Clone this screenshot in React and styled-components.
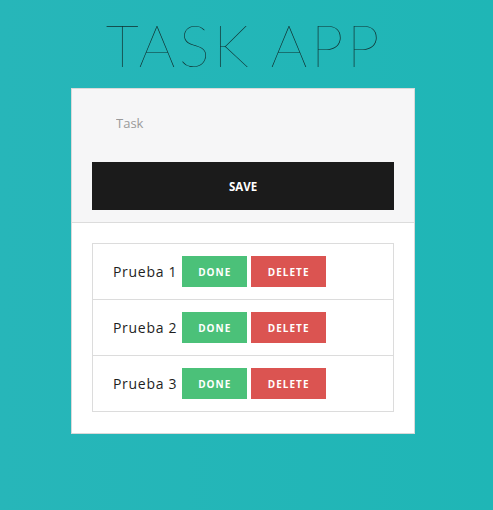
import styled, { createGlobalStyle } from "styled-components";

const Global = createGlobalStyle`
	html, body {
		margin: 0;
		padding: 0;
	}
	body {
		min-height: 510px;
		background: linear-gradient(90deg, #27b6b9 0%, #1fb6b6 100%);
		font-family: "Lato", "Open Sans", sans-serif;
	}
`;

const Page = styled.div`
	display: flex;
	flex-direction: column;
	align-items: center;
	padding: 9px 7px 0 0;
`;

const Title = styled.h1`
	margin: 0 0 8px;
	font-family: "Lato", sans-serif;
	font-weight: 100;
	font-size: 58px;
	line-height: 71px;
	letter-spacing: 3.6px;
	color: #102a2a;
	padding-left: 3px;
`;

const Card = styled.div`
	width: 342px;
	background: #fff;
	border: 1px solid #d9d9d9;
`;

const Form = styled.div`
	display: flex;
	flex-direction: column;
	gap: 16px;
	padding: 11px 20px 12px;
	background: #f6f6f7;
	border-bottom: 1px solid #dcdcdc;
`;

const Input = styled.input`
	height: 46px;
	padding: 0 24px;
	border: none;
	outline: none;
	background: transparent;
	font-family: "Open Sans", sans-serif;
	font-size: 13px;
	color: #333;
	&::placeholder {
		color: #9a9a9a;
	}
`;

const SaveButton = styled.button`
	height: 48px;
	border: none;
	background: #1b1b1b;
	color: #fff;
	font-family: "Open Sans", sans-serif;
	font-weight: 700;
	font-size: 11.5px;
	cursor: pointer;
`;

const ListBox = styled.ul`
	margin: 20px 20px 21px;
	padding: 0;
	list-style: none;
	border: 1px solid #dcdcdc;
`;

const Row = styled.li`
	display: flex;
	align-items: center;
	height: 55px;
	padding-left: 20px;
	border-top: 1px solid #dcdcdc;
	&:first-child {
		border-top: none;
	}
`;

const Name = styled.span`
	font-family: "Open Sans", sans-serif;
	font-size: 14px;
	letter-spacing: 0.7px;
	color: #1e1e1e;
	margin-right: 5px;
`;

const Action = styled.button`
	width: ${(p) => p.$w}px;
	height: 31px;
	margin-right: 4px;
	border: none;
	background: ${(p) => p.$bg};
	color: #fff;
	font-family: "Open Sans", sans-serif;
	font-weight: 700;
	font-size: 10px;
	letter-spacing: 1px;
	cursor: pointer;
`;

const tasks = ["Prueba 1", "Prueba 2", "Prueba 3"];

function App() {
	return (
		<Page>
			<Global />
			<Title>TASK APP</Title>
			<Card>
				<Form>
					<Input placeholder="Task" />
					<SaveButton>SAVE</SaveButton>
				</Form>
				<ListBox>
					{tasks.map((task) => (
						<Row key={task}>
							<Name>{task}</Name>
							<Action $w={65} $bg="#4bc179">
								DONE
							</Action>
							<Action $w={75} $bg="#db5451">
								DELETE
							</Action>
						</Row>
					))}
				</ListBox>
			</Card>
		</Page>
	);
}

export default App;
